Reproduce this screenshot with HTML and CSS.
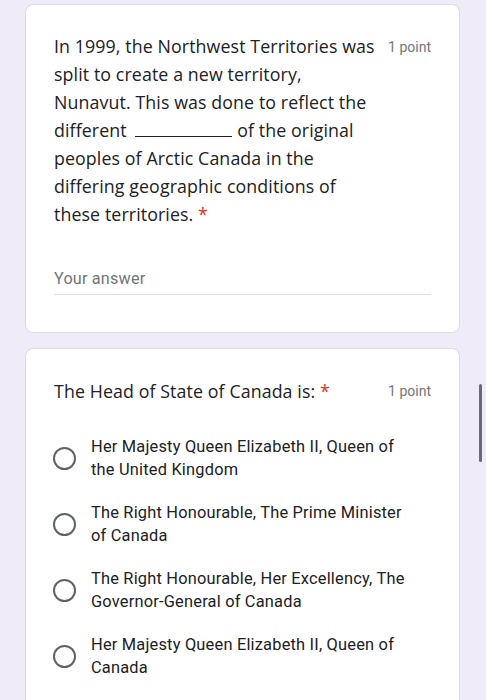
FILE: index.html
```html
<!DOCTYPE html>
<html lang="en">
<head>
  <meta charset="UTF-8" />
  <meta name="viewport" content="width=device-width, initial-scale=1.0" />
  <title>Quiz</title>
  <link rel="stylesheet" href="styles.css">
</head>
<body>
  <div class="form">
    <div class="card">
      <div class="question-head">
        <div class="question-title">
          In 1999, the Northwest Territories was<br>
          split to create a new territory,<br>
          Nunavut. This was done to reflect the<br>
          different <span class="blank"></span> of the original<br>
          peoples of Arctic Canada in the<br>
          differing geographic conditions of<br>
          these territories. <span class="required">*</span>
        </div>
        <div class="points">1 point</div>
      </div>
      <div class="answer">Your answer</div>
    </div>

    <div class="card">
      <div class="question-head single">
        <div class="question-title">The Head of State of Canada is: <span class="required">*</span></div>
        <div class="points">1 point</div>
      </div>
      <div class="options">
        <div class="option">
          <span class="radio"></span>
          <span class="option-text">Her Majesty Queen Elizabeth II, Queen of<br>the United Kingdom</span>
        </div>
        <div class="option">
          <span class="radio"></span>
          <span class="option-text">The Right Honourable, The Prime Minister<br>of Canada</span>
        </div>
        <div class="option">
          <span class="radio"></span>
          <span class="option-text">The Right Honourable, Her Excellency, The<br>Governor-General of Canada</span>
        </div>
        <div class="option">
          <span class="radio"></span>
          <span class="option-text">Her Majesty Queen Elizabeth II, Queen of<br>Canada</span>
        </div>
      </div>
    </div>
  </div>
  <div class="scrollbar"></div>
</body>
</html>
```

FILE: styles.css
```css
body {
  margin: 0;
  background: #f0ebf8;
  font-family: Roboto, Arial, sans-serif;
  color: #202124;
  height: 700px;
  overflow: hidden;
}

.form {
  padding: 4px 26px 0 25px;
}

.card {
  background: #fff;
  border: 1px solid #dadce0;
  border-radius: 8px;
  padding: 27px 28px 37px 28px;
  margin-bottom: 15px;
}

.question-head {
  display: flex;
  align-items: flex-start;
}

.question-title {
  flex: 1;
  font-family: "Open Sans", Arial, sans-serif;
  font-size: 17.8px;
  line-height: 28px;
  letter-spacing: 0.1px;
  white-space: nowrap;
}

.points {
  font-size: 14px;
  color: #757575;
  line-height: 28px;
  padding-top: 1px;
  margin-left: 12px;
}

.blank {
  display: inline-block;
  width: 97px;
  border-bottom: 1px solid #202124;
  margin: 0 0 0 4px;
}

.required {
  color: #d93025;
}

.answer {
  margin-top: 41px;
  font-size: 16.2px;
  color: #70757a;
  padding-bottom: 6px;
  border-bottom: 1px solid #e0e0e0;
  letter-spacing: 0.2px;
}

.single {
  align-items: center;
}

.options {
  margin-top: 30px;
}

.option {
  display: flex;
  align-items: center;
  margin-bottom: 20px;
}

.radio {
  width: 19px;
  height: 19px;
  border: 2px solid #5f6368;
  border-radius: 50%;
  flex-shrink: 0;
  margin-right: 15px;
  margin-left: -1px;
}

.option-text {
  font-size: 16.4px;
  line-height: 23px;
  letter-spacing: 0.2px;
}

.scrollbar {
  position: absolute;
  left: 479px;
  top: 384px;
  width: 3px;
  height: 78px;
  border-radius: 2px;
  background: #6b6a70;
}
```
